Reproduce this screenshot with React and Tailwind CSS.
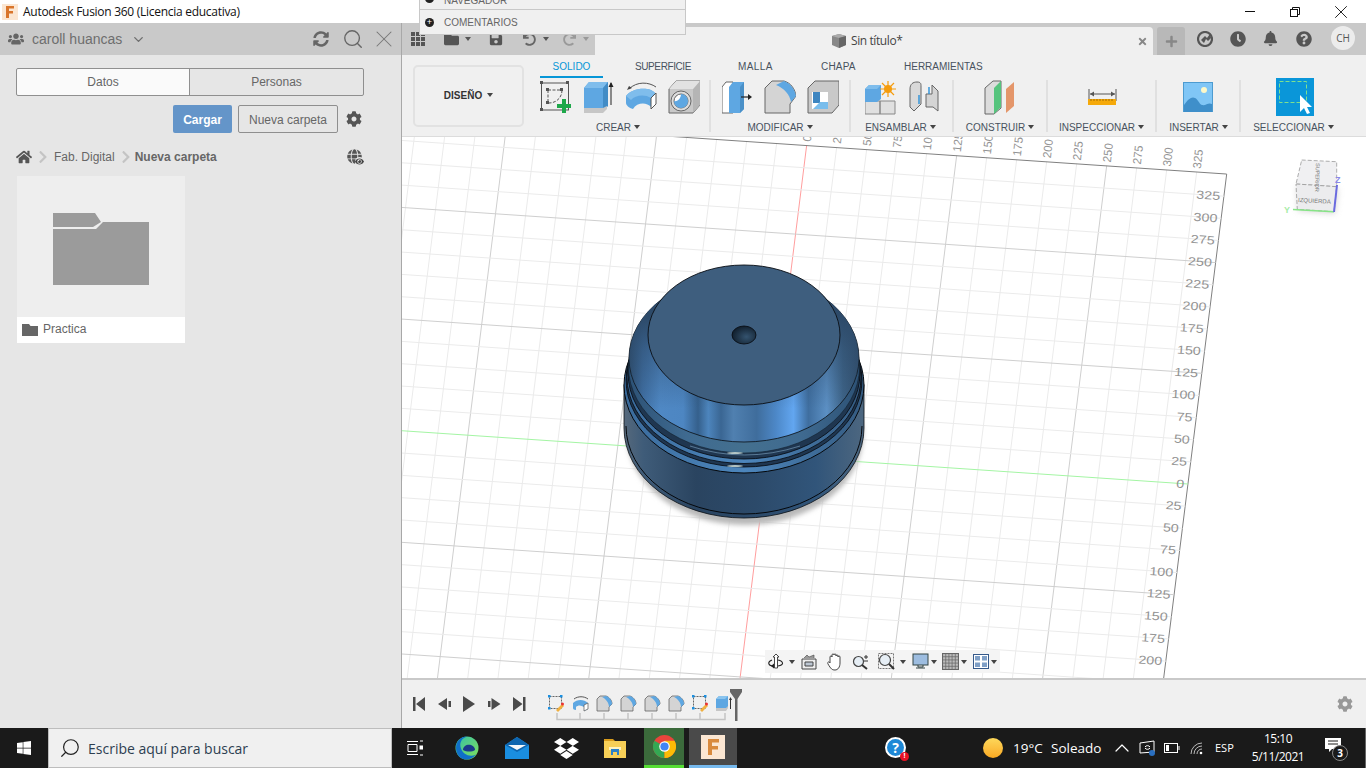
import React from "react";
import { FaUsers, FaHome, FaCog, FaSyncAlt, FaChevronRight, FaGlobe, FaEye, FaWindows, FaDropbox, FaBell, FaQuestionCircle, FaClock, FaFolder, FaSave, FaUndo, FaRedo, FaPlus, FaTimes } from "react-icons/fa";
import { Search, ChevronDown, X, ChevronUp } from "lucide-react";

const Caret = ({ c = "border-t-[#444]" }) => (
  <span className={`inline-block w-0 h-0 border-x-[3.5px] border-x-transparent border-t-[4px] ${c}`} />
);

const Icon = ({ children, w = 32, h = 38 }) => (
  <svg width={w} height={h} viewBox={`0 0 ${w} ${h}`} className="shrink-0 block">{children}</svg>
);

const SketchIcon = () => (
  <Icon>
    <g fill="none" stroke="#555" strokeWidth="1"><rect x="1.500" y="5" width="27" height="27" /><path d="M8 12h14M8 12v13M22 12c0 8-6 13-13 13" strokeDasharray="3 1.500" /></g>
    {[[0,3],[26,3],[0,30],[6,10],[20,10],[6,23]].map(([x, y], i) => <rect key={i} x={x} y={y} width="3" height="3" fill="#555" />)}
    <path d="M22 21h4v5h5v4h-5v5h-4v-5h-5v-4h5z" fill="#1ea84a" />
  </Icon>
);
const ExtrudeIcon = () => (
  <Icon>
    <path d="M1 10l5-6h19v24l-5 4H1z" fill="#5ea7e2" />
    <path d="M1 10l5-6h19l-5 6z" fill="#7fbdec" />
    <path d="M20 10l5-6v24l-5 4z" fill="#428cc6" />
    <path d="M1 30h19l4-2v3l-4 4H1z" fill="#c6c6c6" />
    <path d="M28 5v22" stroke="#222" strokeWidth="1" /><path d="M25.500 9l2.500-5 2.500 5z" fill="#222" />
  </Icon>
);
const RevolveIcon = () => (
  <Icon>
    <path d="M4 11C12 3 24 4 31 9" fill="none" stroke="#555" strokeWidth="1" /><path d="M2 12l2-4 3 2z" fill="#444" />
    <path d="M1 18C6 10 25 8 30 15L26 29C22 24 12 24 8 31C4 30 1 27 1 25Z" fill="#5ea7e2" />
    <path d="M1 18C6 10 25 8 30 15L26 20C20 16 10 17 6 22Z" fill="#7fbdec" />
    <path d="M26 20L31 15V26L26 31Z" fill="#fff" stroke="#555" />
  </Icon>
);
const HoleIcon = () => (
  <Icon>
    <path d="M1 11l7-8h24v24l-7 8H1z" fill="#c9c9c9" stroke="#666" />
    <path d="M25 11l7-8v24l-7 8z" fill="#b5b5b5" />
    <path d="M1 11l7-8h24l-7 8z" fill="#e2e2e2" />
    <circle cx="13" cy="23" r="10" fill="#ddd" stroke="#666" /><circle cx="13" cy="23" r="7" fill="#fff" stroke="#666" />
    <path d="M13 16a7 7 0 1 1-7 7c4 1 7-3 7-7z" fill="#5ea7e2" />
  </Icon>
);
const PressIcon = () => (
  <Icon>
    <path d="M0 9l4-5h7v31H0z" fill="#fff" stroke="#666" />
    <path d="M7 9l4-5h11v27l-4 4H7z" fill="#5ea7e2" /><path d="M18 9l4-5v27l-4 4z" fill="#4a90c8" />
    <path d="M19 19h8" stroke="#222" strokeWidth="1.200" /><path d="M26 16l4 3-4 3z" fill="#222" />
  </Icon>
);
const FilletIcon = () => (
  <Icon>
    <path d="M1 10l7-7h12c7 2 11 8 12 15l-6 8v9H1z" fill="#d4d4d4" stroke="#666" />
    <path d="M12 7l8-4c6 2 11 8 12 15l-5 6c-1-7-7-14-15-17z" fill="#5ea7e2" />
  </Icon>
);
const ShellIcon = () => (
  <Icon>
    <path d="M1 10l7-7h24v24l-7 8H1z" fill="#c9c9c9" stroke="#666" />
    <path d="M5 14h16v17H5z" fill="#fff" />
    <path d="M6 14h7v11H6z" fill="#3d85c0" /><path d="M6 31l7-7h8v7z" fill="#79bdec" />
  </Icon>
);
const NewCompIcon = () => (
  <Icon w={32}>
    <path d="M0 23h15v13H0zM15 23h15v13H15z" fill="#e0e0e0" stroke="#888" />
    <path d="M0 11l4-4h12v14l-4 3H0z" fill="#5ea7e2" /><path d="M0 11l4-4h12l-4 4z" fill="#7fbdec" />
    <circle cx="23" cy="11" r="4" fill="#f59c0d" />
    <path d="M23 3v16M15 11h16M17 5l12 12M29 5L17 17" stroke="#f59c0d" strokeWidth="1.200" />
  </Icon>
);
const JointIcon = () => (
  <Icon w={30}>
    <path d="M1 11c0-5 3-7 7-7s4 2 4 4v18l-7 7-4-4z" fill="#d9d9d9" stroke="#666" />
    <path d="M17 16h6V7l6 6v20l-5-4h-7z" fill="#d4d4d4" stroke="#666" />
    <path d="M10 17v9M20 9v7" stroke="#2a90d8" strokeWidth="1.400" />
  </Icon>
);
const PlaneIcon = () => (
  <Icon>
    <path d="M1 10l8-7h8v27l-7 6H1z" fill="#dcdcdc" stroke="#666" />
    <path d="M10 10l7-7v26l-7 7z" fill="#56c47d" />
    <path d="M22 11l8-7v24l-8 7z" fill="#e4966a" />
  </Icon>
);
const InspectIcon = () => (
  <Icon w={30}>
    <path d="M2 11v12M29 11v12M3 16h25" stroke="#555" strokeWidth="1" fill="none" />
    <path d="M3 16l4-2.500v5zM28 16l-4-2.500v5z" fill="#555" />
    <rect x="1" y="21" width="28" height="6" fill="#f5a90a" />
    <path d="M4 21v2M7 21v2M10 21v2M13 21v2M16 21v2M19 21v2M22 21v2M25 21v2" stroke="#a56d00" strokeWidth="1" />
  </Icon>
);
const InsertIcon = () => (
  <Icon w={30}>
    <rect x="0.500" y="4.500" width="29" height="29" fill="#80c6f6" stroke="#4d9bd0" />
    <circle cx="21" cy="12" r="3" fill="#fdf8c8" />
    <path d="M1 27c4-6 8-9 11-7 3 1 4 6 7 7 4 1 6-3 10-1v8H1z" fill="#3f8fca" />
  </Icon>
);
const SelectIcon = () => (
  <svg width="38" height="38" viewBox="0 0 38 38" className="shrink-0 block">
    <rect width="38" height="38" fill="#0a96d9" />
    <rect x="3.500" y="3.500" width="27" height="21" fill="none" stroke="#7fe08f" strokeWidth="1" strokeDasharray="4 2" />
    <path d="M24 17v17l4-4 3 6 3-1-3-6h5z" fill="#fff" />
  </svg>
);

const Group = ({ w, label, gap, lx = "", ix = "", children }) => (
  <div className={`${w} flex flex-col shrink-0`}>
    <div className={`h-[38px] flex justify-center ${gap} ${ix}`}>{children}</div>
    <div className={`h-[20px] pt-[2px] flex items-center justify-center gap-[3px] text-[10px] text-[#48525e] ${lx}`}>
      {label}<Caret />
    </div>
  </div>
);
const Sep = () => <div className="w-[2px] h-[52px] mt-[2px] bg-[#e0e0e0] shrink-0" />;

function Model() {
  return (
    <g>
      <defs>
        <linearGradient id="cone" x1="0" x2="1" y1="0" y2="0">
          {[[0,"#2d4c6c"],[.06,"#3f6fa3"],[.135,"#4f88c4"],[.236,"#4d86c2"],[.3,"#35608c"],[.345,"#4d85bd"],[.4,"#3a6693"],[.454,"#5080b0"],[.555,"#3f6d9c"],[.64,"#4d88c8"],[.715,"#62a6f0"],[.78,"#3f6e9f"],[.86,"#5c90c4"],[.93,"#3e6488"],[1,"#324f6d"]].map(([o, c]) => <stop key={o} offset={o} stopColor={c} />)}
        </linearGradient>
        <linearGradient id="coneShade" x1="0" x2="0" y1="0" y2="1">
          <stop offset="0.25" stopColor="#2d4a69" stopOpacity="1" />
          <stop offset="0.45" stopColor="#2d4a69" stopOpacity=".5" />
          <stop offset="0.8" stopColor="#2d4a69" stopOpacity="0" />
        </linearGradient>
        <linearGradient id="body" x1="0" x2="1" y1="0" y2="0">
          <stop offset="0" stopColor="#56697c" /><stop offset=".08" stopColor="#3f5c79" /><stop offset=".3" stopColor="#2a4460" />
          <stop offset=".55" stopColor="#2c4a6a" /><stop offset=".8" stopColor="#31557a" /><stop offset="1" stopColor="#4d6780" />
        </linearGradient>
        <linearGradient id="ring" x1="0" x2="1" y1="0" y2="0">
          <stop offset="0" stopColor="#3a6b9c" /><stop offset=".5" stopColor="#4d86bc" /><stop offset="1" stopColor="#345a80" />
        </linearGradient>
        <linearGradient id="glass" x1="0" x2="1" y1="0" y2="0">
          <stop offset="0" stopColor="#2d5276" /><stop offset=".25" stopColor="#3f6a90" /><stop offset=".5" stopColor="#44708f" /><stop offset=".75" stopColor="#3f6a90" /><stop offset="1" stopColor="#2d5276" />
        </linearGradient>
        <radialGradient id="hole" cx=".6" cy=".6" r=".7"><stop offset="0" stopColor="#34536f" /><stop offset="1" stopColor="#0c1824" /></radialGradient>
        <filter id="blur" x="-10%" y="-10%" width="120%" height="120%"><feGaussianBlur stdDeviation="2.500" /></filter>
        <filter id="blur2" x="-30%" y="-30%" width="160%" height="160%"><feGaussianBlur stdDeviation="3" /></filter>
      </defs>
      <ellipse cx="745" cy="435" rx="118" ry="90" fill="#b8b8b8" filter="url(#blur)" />
      <path d="M624 385C624 370 864 370 864 385V428A120 90 0 0 1 624 428Z" fill="url(#body)" stroke="#0a0f14" strokeWidth=".8" />
      <path d="M626 426A118 88 0 0 0 862 426" fill="none" stroke="#05080c" strokeWidth="1" />
      <ellipse cx="744" cy="385" rx="120" ry="88" fill="url(#ring)" stroke="#05080c" strokeWidth="1" />
      <ellipse cx="744" cy="380" rx="118" ry="87" fill="#1f3650" stroke="#05080c" strokeWidth=".8" />
      <ellipse cx="744" cy="377" rx="117" ry="86.500" fill="url(#ring)" stroke="#05080c" strokeWidth=".8" />
      <ellipse cx="744" cy="373" rx="116" ry="86" fill="#1f3650" stroke="#05080c" strokeWidth=".8" />
      <ellipse cx="744" cy="367" rx="115.500" ry="86" fill="url(#glass)" stroke="#10202e" strokeWidth=".6" />
      <path d="M690 446Q744 464 800 446" fill="none" stroke="#86aecb" strokeWidth=".8" opacity=".7" />
      <ellipse cx="735" cy="453" rx="8" ry=".8" fill="#e6f7f0" />
      <ellipse cx="735" cy="466" rx="8" ry=".8" fill="#e6f7f0" />
      <ellipse cx="744" cy="358" rx="115" ry="84" fill="url(#cone)" stroke="#0a0f14" strokeWidth=".8" />
      <ellipse cx="744" cy="358" rx="115" ry="84" fill="url(#coneShade)" />
      <ellipse cx="744" cy="335" rx="96" ry="70" fill="#3e5e7e" stroke="#0a0f14" strokeWidth=".9" />
      <ellipse cx="744" cy="335" rx="12" ry="9" fill="url(#hole)" stroke="#05080c" strokeWidth=".8" />
    </g>
  );
}

function Canvas() {
  const lines = [];
  for (let i = -16; i <= 14; i++) {
    const x = 806.700 + 30 * i, y = 145 + 2.070 * i;
    const c = i === 0 ? "#ff9e9e" : i === 14 ? "#808080" : i % 5 === 0 ? "#cfcfcf" : "#ebebeb";
    lines.push(<line key={"v" + i} x1={x} y1={y} x2={x - 0.125 * 600} y2={y + 600} stroke={c} strokeWidth="1" />);
  }
  for (let k = -10; k <= 14; k++) {
    const x = 1188 + 2.760 * k, y = 484 - 22.140 * k;
    const c = k === 0 ? "#a4f5a4" : k === 14 ? "#808080" : k % 5 === 0 ? "#cfcfcf" : "#ebebeb";
    lines.push(<line key={"h" + k} x1={x} y1={y} x2={x - 900} y2={y - 61} stroke={c} strokeWidth="1" />);
  }
  const labels = [];
  for (let i = 0; i <= 13; i++) {
    const x = 806.700 + 30 * i, y = 145 + 2.070 * i;
    labels.push(
      <text key={"t" + i} transform={`translate(${x + 4} ${y - 3}) rotate(-83) scale(.88 .9)`} fontSize="13" fill="#939393" fontFamily="'Liberation Sans',sans-serif">{25 * i}</text>
    );
  }
  for (let k = 13; k >= -8; k--) {
    const x = 1188 + 2.760 * k - 4, y = 484 - 22.140 * k;
    labels.push(
      <text key={"r" + k} transform={`translate(${x} ${y + 4}) rotate(4) scale(1.100 .9)`} textAnchor="end" fontSize="13" fill="#939393" fontFamily="'Liberation Sans',sans-serif">{Math.abs(25 * k)}</text>
    );
  }
  return (
    <div className="relative flex-1 bg-white overflow-hidden">
      <svg width="964" height="541" viewBox="402 137 964 541" className="block">
        {lines}
        {labels}
        <Model />
        <g>
          <path d="M1297 209l37 2.500 3-25-41-2.500z" fill="#bbb" filter="url(#blur2)" transform="translate(1 2)" opacity=".6" />
          <path d="M1301.700 160l35 1.700v25L1296 184z" fill="#f0f0f2" stroke="#999" strokeWidth=".8" strokeDasharray="4 2" />
          <path d="M1296 184l40.700 2.700-2.700 25-36.700-2.400z" fill="#ececee" stroke="#999" strokeWidth=".8" strokeDasharray="4 2" />
          <path d="M1293 209.500l41 2.200" stroke="#86e486" strokeWidth="1.500" />
          <path d="M1337 185l-3 27" stroke="#6a6ae0" strokeWidth="2" />
          <text x="1284" y="213" fontSize="9" fontWeight="bold" fill="#a6eca6" fontFamily="'Liberation Sans',sans-serif">Y</text>
          <text x="1335" y="183" fontSize="9" fontWeight="bold" fill="#8a8ae8" fontFamily="'Liberation Sans',sans-serif">Z</text>
          <text transform="translate(1298 202) rotate(3)" fontSize="6" fill="#777" fontFamily="'Liberation Sans',sans-serif">IZQUIERDA</text>
          <text transform="translate(1316 163) rotate(92)" fontSize="5.500" fill="#777" fontFamily="'Liberation Sans',sans-serif">SUPERIOR</text>
        </g>
      </svg>
      <div className="absolute left-[363px] bottom-[5px] w-[235px] h-[23px] bg-[#f4f4f4] flex items-center pl-[3px] text-[#444]">
        <svg width="16" height="18" viewBox="0 0 16 18"><path d="M8 1l3 3H9.500v11h-3V4H5z" fill="#fff" stroke="#333" strokeWidth=".9" /><path d="M4 7C-1 9 0 13 6 13m4-6c5 1 7 5 0 6" fill="none" stroke="#222" strokeWidth="1.100" /><path d="M6 10.500v5l-3-2.500z" fill="#222" /></svg>
        <span className="ml-[5px] flex"><Caret /></span>
        <svg className="ml-[6px]" width="16" height="16" viewBox="0 0 16 16"><path d="M1 5h14v10H1z" fill="#eee" stroke="#444" /><path d="M4 8h8v4H4z" fill="#bcc6d2" stroke="#444" /><path d="M3 4l3-3 2 2 5-2v3" fill="#999" stroke="#444" strokeWidth=".6" /></svg>
        <svg className="ml-[9px]" width="17" height="18" viewBox="0 0 17 18" fill="#fff" stroke="#333" strokeWidth=".9"><path d="M4 10V4c0-1.500 2-1.500 2 0V2c0-1.500 2-1.500 2 0v0c0-1.500 2-1.500 2 0v1c0-1.500 2-1.500 2 0v1c0-1.500 2-1.500 2 0v6c0 4-2 7-5 7-3 0-4-1-7-6-1-2 1-3 2-1z" /></svg>
        <svg className="ml-[9px]" width="17" height="16" viewBox="0 0 17 16"><circle cx="6.500" cy="7.500" r="5" fill="#e6eef5" stroke="#444" strokeWidth="1.200" /><path d="M10 11l5 4" stroke="#333" strokeWidth="2" /><path d="M12 3h4M14 1v4M12 7h4" stroke="#333" /></svg>
        <svg className="ml-[9px]" width="17" height="17" viewBox="0 0 17 17"><rect x=".5" y=".5" width="15" height="15" fill="none" stroke="#777" strokeDasharray="2 1" /><circle cx="7" cy="7" r="5.500" fill="#e6eef5" stroke="#444" strokeWidth="1.200" /><path d="M11 11l5 5" stroke="#333" strokeWidth="2" /></svg>
        <span className="ml-[5px] flex"><Caret /></span>
        <svg className="ml-[6px]" width="17" height="17" viewBox="0 0 17 17"><rect x="1" y="1" width="15" height="11" fill="#9dbde0" stroke="#344" /><path d="M6 12v2h5v-2M4 15h9" fill="none" stroke="#344" /></svg>
        <span className="ml-[2px] flex"><Caret /></span>
        <svg className="ml-[5px]" width="17" height="17" viewBox="0 0 16 16"><rect x=".5" y=".5" width="15" height="15" fill="#bbb" stroke="#666" /><path d="M3.500 0v16M6.500 0v16M9.500 0v16M12.500 0v16M0 3.500h16M0 6.500h16M0 9.500h16M0 12.500h16" stroke="#666" strokeWidth=".7" /></svg>
        <span className="ml-[2px] flex"><Caret /></span>
        <svg className="ml-[6px]" width="16" height="15" viewBox="0 0 16 15"><rect x=".5" y=".5" width="15" height="14" fill="#fff" stroke="#35598a" /><path d="M2 2h5v4.500H2zM9 2h5v4.500H9zM2 8.500h5V13H2zM9 8.500h5V13H9z" fill="#7f9fc6" /></svg>
        <span className="ml-[2px] flex"><Caret /></span>
      </div>
    </div>
  );
}

const TimelineFeat = ({ kind }) => {
  if (kind === "sk") return (
    <svg width="17" height="17" viewBox="0 0 17 17" className="shrink-0"><rect x="1.500" y="1.500" width="12" height="12" fill="none" stroke="#666" strokeDasharray="2 1" />{[[0,0],[12,0],[0,12]].map(([x,y],i)=><rect key={i} x={x} y={y} width="2.500" height="2.500" fill="#1b8fe0"/>)}<path d="M8 15l6-6 2 2-6 6z" fill="#f0b040" /><circle cx="14.500" cy="9" r="1.500" fill="#e33" /></svg>
  );
  if (kind === "rev") return (
    <svg width="17" height="17" viewBox="0 0 17 17" className="shrink-0"><path d="M2 4c4-3 10-3 14 0" fill="none" stroke="#555" /><path d="M1 8c4-4 11-4 15 0v6l-4 2v-4c-3-2-6-2-8 0v3c-2 0-3-1-3-2z" fill="#5ea7e2" /><path d="M12 10l4-2v6l-4 2z" fill="#fff" stroke="#555" strokeWidth=".7" /></svg>
  );
  if (kind === "ex") return (
    <svg width="17" height="17" viewBox="0 0 17 17" className="shrink-0"><path d="M0 4l3-3h9v11l-2 3H0z" fill="#5ea7e2" /><path d="M0 4l3-3h9l-3 3z" fill="#8ac4ee" /><path d="M0 13h10l2-2v2l-2 3H0z" fill="#c6c6c6" /><path d="M14.500 3v11" stroke="#333" /><path d="M13 5l1.500-3 1.500 3z" fill="#333" /></svg>
  );
  return (
    <svg width="17" height="17" viewBox="0 0 17 17" className="shrink-0"><path d="M1 4l3-3h6c3 1 6 4 6 8l-3 3v4H1z" fill="#d4d4d4" stroke="#666" strokeWidth=".8" /><path d="M6 2l4-1c3 1 6 4 6 8l-3 3c0-4-3-8-7-10z" fill="#5ea7e2" /></svg>
  );
};

const Transport = ({ d }) => (
  <svg width="13" height="16" viewBox="0 0 13 16" className="shrink-0"><path d={d} fill="#4a4a4a" /></svg>
);

export default function App() {
  const sans = "font-['Liberation_Sans',Arial,sans-serif]";
  const seg = "font-['Open_Sans',sans-serif]";
  return (
    <div className={`relative w-[1366px] h-[768px] overflow-hidden flex flex-col bg-white ${sans}`}>
      {/* title bar */}
      <div className="h-[23px] bg-white flex items-center shrink-0">
        <svg className="ml-[2px]" width="16" height="16" viewBox="0 0 16 16"><rect width="16" height="16" fill="#fbe6d2" /><path d="M4 2h8v2.500H7V7h4v2.500H7V14H4z" fill="#d9752b" /></svg>
        <span className={`ml-[5px] text-[12px] tracking-[-0.28px] text-[#111] ${seg}`}>Autodesk Fusion 360 (Licencia educativa)</span>
        <div className="ml-auto flex items-center">
          <div className="w-[10px] h-[1px] bg-[#111] mr-[35px]" />
          <svg className="mr-[30px]" width="10" height="10" viewBox="0 0 10 10" fill="none" stroke="#111"><path d="M2.500 2.500V.5h7v7h-2" /><rect x=".5" y="2.500" width="7" height="7" fill="#fff" /></svg>
          <X size={22} strokeWidth={1} color="#111" className="mr-[14px]" />
        </div>
      </div>

      <div className="flex flex-1 min-h-0">
        {/* left panel */}
        <div className="w-[402px] shrink-0 bg-[#e6e6e6] border-r border-[#a8a8a8] flex flex-col">
          <div className="h-[32px] bg-[#c9c9c9] flex items-center pl-[8px] text-[#6e6e6e] shrink-0">
            <FaUsers size={16} color="#666" />
            <span className="ml-[8px] text-[14px]">caroll huancas</span>
            <ChevronDown size={15} strokeWidth={2.200} className="ml-[9px]" />
            <FaSyncAlt size={16} color="#666" className="ml-[167px]" />
            <Search size={22} strokeWidth={1.500} className="ml-[13px]" color="#666" />
            <X size={28} strokeWidth={0.900} className="ml-[6px]" color="#777" />
          </div>
          <div className="mt-[13px] ml-[16px] w-[348px] h-[28px] flex border border-[#8f8f8f] rounded-[2px] text-[12px] text-[#666]">
            <div className="w-[173px] bg-[#fafafa] border-r border-[#8f8f8f] flex items-center justify-center rounded-l-[2px]">Datos</div>
            <div className="flex-1 flex items-center justify-center">Personas</div>
          </div>
          <div className="mt-[9px] h-[28px] flex items-center pl-[173px]">
            <div className="w-[59px] h-[28px] pt-[1px] bg-[#6495c9] rounded-[2px] text-white font-bold text-[12px] flex items-center justify-center">Cargar</div>
            <div className="ml-[6px] w-[100px] h-[28px] pt-[1px] border border-[#8f8f8f] rounded-[2px] text-[#666] text-[12px] flex items-center justify-center">Nueva carpeta</div>
            <FaCog size={16} color="#555" className="ml-[8px]" />
          </div>
          <div className="mt-[12px] h-[24px] flex items-center pl-[16px] text-[12px] text-[#666]">
            <FaHome size={16} color="#555" />
            <FaChevronRight size={14} color="#c4c4c4" className="ml-[4px]" />
            <span className="ml-[4px]">Fab. Digital</span>
            <FaChevronRight size={14} color="#c4c4c4" className="ml-[4px]" />
            <span className="ml-[2px] font-bold">Nueva carpeta</span>
            <span className="relative ml-[130px] w-[16px] h-[16px] block">
              <FaGlobe size={15} color="#555" />
              <FaEye size={9} color="#444" className="absolute right-[-1px] bottom-[-1px] bg-[#e6e6e6] rounded-full" />
            </span>
          </div>
          <div className="mt-[7px] ml-[17px] w-[168px] h-[167px] flex flex-col">
            <div className="h-[141px] pt-[4px] bg-[#eeeeee] flex items-center justify-center">
              <svg width="96" height="72" viewBox="0 0 96 72"><path d="M0 0h42l6 9H96v63H0z" fill="#9b9b9b" /><path d="M0 14h40l8-5 2 0-7 7H0z" fill="#eee" /></svg>
            </div>
            <div className="h-[26px] bg-white flex items-center pl-[5px] text-[12px] text-[#666]">
              <svg width="16" height="12" viewBox="0 0 16 12"><path d="M0 0h7l1.500 2H16v10H0z" fill="#666" /></svg>
              <span className="ml-[5px] mb-[3px]">Practica</span>
            </div>
          </div>
        </div>

        {/* right */}
        <div className="flex-1 flex flex-col min-w-0">
          <div className="h-[32px] bg-[#c9c9c9] flex shrink-0 text-[#555]">
            <div className="w-[193px] flex items-center pl-[9px] shrink-0">
              <svg width="14" height="14" viewBox="0 0 14 14" fill="#555"><path d="M0 0h4v4H0zM5 0h4v4H5zM10 0h4v4h-4zM0 5h4v4H0zM5 5h4v4H5zM10 5h4v4h-4zM0 10h4v4H0zM5 10h4v4H5zM10 10h4v4h-4z" /></svg>
              <FaFolder size={15} className="ml-[19px]" color="#555" />
              <span className="ml-[6px] flex"><Caret c="border-t-[#555]" /></span>
              <FaSave size={14} className="ml-[18px]" color="#555" />
              <FaUndo size={13} className="ml-[20px]" color="#666" />
              <span className="ml-[7px] flex"><Caret c="border-t-[#555]" /></span>
              <FaRedo size={13} className="ml-[14px]" color="#999" />
              <span className="ml-[7px] flex"><Caret c="border-t-[#999]" /></span>
            </div>
            <div className="mt-[4px] w-[558px] bg-[#f0f0f0] rounded-t-[4px] flex items-center shrink-0 relative">
              <div className="ml-[236px] flex items-center">
                <svg width="16" height="16" viewBox="0 0 16 16"><path d="M1 3l7-2 7 2v9l-7 3-7-3z" fill="#888" /><path d="M1 3l7-2 7 2-7 2z" fill="#aaa" /><path d="M8 5l7-2v9l-7 3z" fill="#666" /></svg>
                <span className={`ml-[4px] text-[12px] text-[#444] tracking-[-0.4px] ${seg}`}>Sin título*</span>
              </div>
              <FaTimes size={11} color="#888" className="ml-auto mr-[5px]" />
            </div>
            <div className="ml-[4px] mt-[4px] w-[28px] bg-[#b8b8b8] rounded-t-[3px] flex items-center justify-center shrink-0"><FaPlus size={13} color="#888" /></div>
            <svg className="ml-[12px] mt-[8px]" width="16" height="16" viewBox="0 0 16 16"><circle cx="8" cy="8" r="7" fill="none" stroke="#555" strokeWidth="2.200" /><path d="M4 9l4-4 2 2 3-4 1 4-3 3-2-2-2 4z" fill="#555" /></svg>
            <span className="ml-[17px] mt-[8px]"><FaClock size={16} color="#555" /></span>
            <span className="ml-[17px] mt-[8px]"><FaBell size={15} color="#555" /></span>
            <span className="ml-[18px] mt-[8px]"><FaQuestionCircle size={16} color="#555" /></span>
            <div className={`ml-[19px] mt-[3px] w-[24px] h-[24px] rounded-full bg-[#ececec] flex items-center justify-center text-[10px] text-[#555] ${seg}`}>CH</div>
          </div>

          {/* ribbon */}
          <div className="h-[82px] bg-[#f0f0f0] flex pl-[11px] shrink-0 border-b border-[#dcdcdc]">
            <div className="mt-[10px] w-[111px] h-[62px] pb-[2px] border-2 border-[#e2e2e2] rounded-[5px] flex items-center justify-center gap-[5px] text-[10px] font-bold text-[#333] shrink-0">
              DISEÑO <Caret />
            </div>
            <div className="ml-[9px] flex flex-col">
              <div className="h-[24px] flex text-[10px] text-[#48525e]">
                <div className="ml-[7px] w-[63px] pt-[1px] border-b-2 border-[#0696d7] text-[#0696d7] flex items-center justify-center">SOLIDO</div>
                <div className="ml-[32px] w-[56px] h-[22px] flex items-center whitespace-nowrap tracking-[-0.4px]">SUPERFICIE</div>
                <div className="ml-[47px] w-[36px] h-[22px] flex items-center tracking-[0.4px]">MALLA</div>
                <div className="ml-[47px] w-[35px] h-[22px] flex items-center tracking-[0.2px]">CHAPA</div>
                <div className="ml-[48px] h-[22px] flex items-center">HERRAMIENTAS</div>
              </div>
              <div className="flex h-[58px]">
                <Group w="w-[176px]" label="CREAR" gap="gap-[10.500px]" ix="pr-[2px]" lx="pr-[6px]"><SketchIcon /><ExtrudeIcon /><RevolveIcon /><HoleIcon /></Group>
                <Sep />
                <Group w="w-[138px]" label="MODIFICAR" gap="gap-[10.500px]"><PressIcon /><FilletIcon /><ShellIcon /></Group>
                <Sep />
                <Group w="w-[101px]" label="ENSAMBLAR" gap="gap-[12px]" lx="pr-[2px]"><NewCompIcon /><JointIcon /></Group>
                <Sep />
                <Group w="w-[92px]" label="CONSTRUIR" gap=""><PlaneIcon /></Group>
                <Sep />
                <Group w="w-[107px]" label="INSPECCIONAR" gap=""><InspectIcon /></Group>
                <Sep />
                <Group w="w-[82px]" label="INSERTAR" gap="" lx="pl-[1px]"><InsertIcon /></Group>
                <Sep />
                <Group w="w-[106px]" label="SELECCIONAR" gap="" ix="pl-[1px]" lx="pr-[1px]"><SelectIcon /></Group>
              </div>
            </div>
          </div>

          <Canvas />

          {/* timeline */}
          <div className="h-[50px] shrink-0 bg-[#f0f0f0] border-t-2 border-[#c9c9c9] flex items-center pl-[11px]">
            <div className="flex gap-[12px]">
              <Transport d="M0 1h2.500v14H0zM3 8l9-7v14z" />
              <Transport d="M0 8l9-6v12zM10.500 5h2.500v6h-2.500z" />
              <Transport d="M0 0l12 8-12 8z" />
              <Transport d="M0 5h2.500v6H0zM3.500 2l9 6-9 6z" />
              <Transport d="M0 1l9.500 7-9.500 7zM10 1h2.500v14H10z" />
            </div>
            <div className="ml-[22px] mt-[8px] flex flex-col">
              <div className="flex gap-[7px] h-[17px]">
                {["sk","rev","f","f","f","f","sk","ex"].map((k, i) => <TimelineFeat key={i} kind={k} />)}
              </div>
              <svg width="185" height="8" viewBox="0 0 185 8" className="mt-[1px] block">
                <path d="M9 0v6.500H177V0M32 0v6M56 0v6M80 0v6M104 0v6M128 0v6M152 0v6" fill="none" stroke="#c4c4c4" strokeWidth="1.500" />
              </svg>
            </div>
            <svg className="ml-[-3px] mt-[2px]" width="12" height="32" viewBox="0 0 12 32"><path d="M0 0h12v3l-4.500 7v22H5V10L0 3z" fill="#666" /></svg>
            <FaCog size={16} color="#999" className="ml-auto mr-[13px]" />
          </div>
        </div>
      </div>

      {/* taskbar */}
      <div className={`h-[40px] bg-[#1a1a1a] flex items-center shrink-0 text-white ${seg}`}>
        <FaWindows size={16} className="ml-[16px]" />
        <div className="ml-[16px] w-[344px] h-[40px] bg-[#f0f0f0] border border-[#bdbdbd] flex items-center pl-[10px] text-[#2d3e50] text-[14px] shrink-0">
          <Search size={22} strokeWidth={1.300} color="#222" className="-scale-x-100" />
          <span className="ml-[7px]">Escribe aquí para buscar</span>
        </div>
        <svg className="ml-[15px]" width="16" height="16" viewBox="0 0 16 16" fill="none" stroke="#fff"><path d="M0 1.500h11M0 14.500h11M1 4.500h9v7H1zM13 1h3M13 15h3" /><rect x="13" y="6" width="3" height="3" fill="#fff" /></svg>
        <svg className="ml-[32px]" width="24" height="24" viewBox="0 0 24 24">
          <defs><linearGradient id="e1" x1="0" y1="0" x2="1" y2="1"><stop offset="0" stopColor="#36c1a8" /><stop offset="1" stopColor="#7fe05a" /></linearGradient></defs>
          <circle cx="12" cy="12" r="11.500" fill="url(#e1)" />
          <path d="M1 12C1 5 6 .5 12 .5c-6 2-8 7-6 12 2 6 9 9 15 6-3 4-7 5-10 5C5 23.500 1 18 1 12z" fill="#0f6fc8" />
          <path d="M8 14c0-4 4-6 8-5 3 1 4 3 4 5-3 2-8 2-12 0z" fill="#1a3a8a" />
        </svg>
        <svg className="ml-[26px]" width="24" height="24" viewBox="0 0 24 24"><path d="M0 9l12-8 12 8v14H0z" fill="#1a8ee0" /><path d="M0 9l12-8 12 8-12 7z" fill="#0e66b0" /><path d="M3 9h18l-9 5z" fill="#f4f8fb" /></svg>
        <FaDropbox size={25} className="ml-[25px]" />
        <svg className="ml-[25px]" width="22" height="20" viewBox="0 0 22 20"><path d="M0 1h9l2 2H0z" fill="#d99c1c" /><path d="M0 3h22v17H0z" fill="#f7cf57" /><path d="M5 9h12v3H5z" fill="#fff3c0" /><path d="M7 11h8v6h-2v-3H9v3H7z" fill="#2a80c8" /></svg>
        <div className="ml-[18px] w-[40px] h-[40px] bg-[#3b6a3b] border-b-[3px] border-[#55dd33] flex items-center justify-center">
          <svg width="23" height="23" viewBox="0 0 24 24"><circle cx="12" cy="12" r="12" fill="#e8453c" /><path d="M12 12L1.600 6A12 12 0 0 0 12 24z" fill="#34a853" /><path d="M12 12V24A12 12 0 0 0 22.400 6H12z" fill="#fbbc05" /><circle cx="12" cy="12" r="5.500" fill="#fff" /><circle cx="12" cy="12" r="4.300" fill="#4285f4" /></svg>
        </div>
        <div className="ml-[5px] w-[48px] h-[40px] bg-[#4a4a4a] border-b-[3px] border-[#76b9ed] flex items-center justify-center">
          <svg width="24" height="24" viewBox="0 0 24 24"><rect width="24" height="24" fill="#fbe6d2" /><path d="M7 4h11v3.500H11V11h6v3.500h-6V20H7z" fill="#d98a3d" /></svg>
        </div>
        <div className="ml-[148px] relative w-[22px] h-[22px] shrink-0">
          <div className="w-[21px] h-[21px] rounded-full bg-[#1e88d6] border-2 border-white flex items-center justify-center text-[14px] font-bold">?</div>
          <div className="absolute right-[-2px] bottom-[-2px] w-[9px] h-[9px] rounded-full bg-[#e81123] text-[7px] font-bold flex items-center justify-center">!</div>
        </div>
        <div className="ml-[76px] w-[20px] h-[20px] rounded-full bg-gradient-to-b from-[#fdd85a] to-[#f9a91f]" />
        <span className="ml-[10px] text-[13.500px] w-[38px]">19°C</span>
        <span className="text-[13.500px] w-[60px]">Soleado</span>
        <ChevronUp size={24} strokeWidth={1.200} className="ml-[-1px]" />
        <svg className="ml-[5px]" width="17" height="17" viewBox="0 0 17 17" fill="none" stroke="#fff"><path d="M1 3l14-2v11L1 13z" /><path d="M6 7a3 3 0 0 1 5 0M11 8a3 3 0 0 1-5 0" /><circle cx="13" cy="13" r="3" fill="#2a6fc0" stroke="none" /></svg>
        <svg className="ml-[8px]" width="16" height="10" viewBox="0 0 16 10" fill="none" stroke="#fff"><rect x=".5" y=".5" width="13" height="9" /><rect x="2" y="2" width="3" height="6" fill="#fff" stroke="none" /><path d="M15 3v4" /></svg>
        <svg className="ml-[10px]" width="13" height="13" viewBox="0 0 13 13" fill="none" stroke="#bbb"><path d="M1 12A11 11 0 0 1 12 1M4 12A8 8 0 0 1 12 4M7 12A5 5 0 0 1 12 7" /><circle cx="11" cy="11" r="1.300" fill="#fff" stroke="none" /></svg>
        <span className="ml-[12px] w-[19px] text-[11px]">ESP</span>
        <div className="ml-[11px] w-[66px] flex flex-col items-center text-[12px] leading-[18px] tracking-[-0.5px]">
          <span>15:10</span><span>5/11/2021</span>
        </div>
        <div className="ml-[14px] relative w-[20px] h-[20px]">
          <svg width="16" height="15" viewBox="0 0 16 15"><path d="M0 0h16v11H7l-3 3v-3H0z" fill="#fff" /><path d="M3 3h10M3 6h10" stroke="#1a1a1a" /></svg>
          <div className="absolute right-[-3px] bottom-[-3px] w-[16px] h-[16px] rounded-full bg-[#1a1a1a] border border-[#888] text-[10px] font-bold flex items-center justify-center">3</div>
        </div>
        <div className="ml-auto w-[1px] h-[40px] bg-[#666]" />
      </div>

      {/* floating browser menu */}
      <div className={`absolute left-[419px] top-0 w-[267px] h-[35px] bg-[#f0f0f0] border border-t-0 border-[#c8c8c8] text-[10px] text-[#666] flex flex-col ${sans}`}>
        <div className="h-[10px] border-b border-[#c8c8c8] flex items-end overflow-hidden pl-[5px]">
          <span className="w-[9px] h-[9px] rounded-full bg-[#222] mb-[6px] shrink-0" />
          <span className="ml-[10px] relative top-[-3px] leading-none">NAVEGADOR</span>
        </div>
        <div className="flex-1 flex items-center pl-[5px]">
          <span className="w-[9px] h-[9px] rounded-full bg-[#222] text-white text-[9px] leading-none flex items-center justify-center">+</span>
          <span className="ml-[10px]">COMENTARIOS</span>
        </div>
      </div>
    </div>
  );
}
